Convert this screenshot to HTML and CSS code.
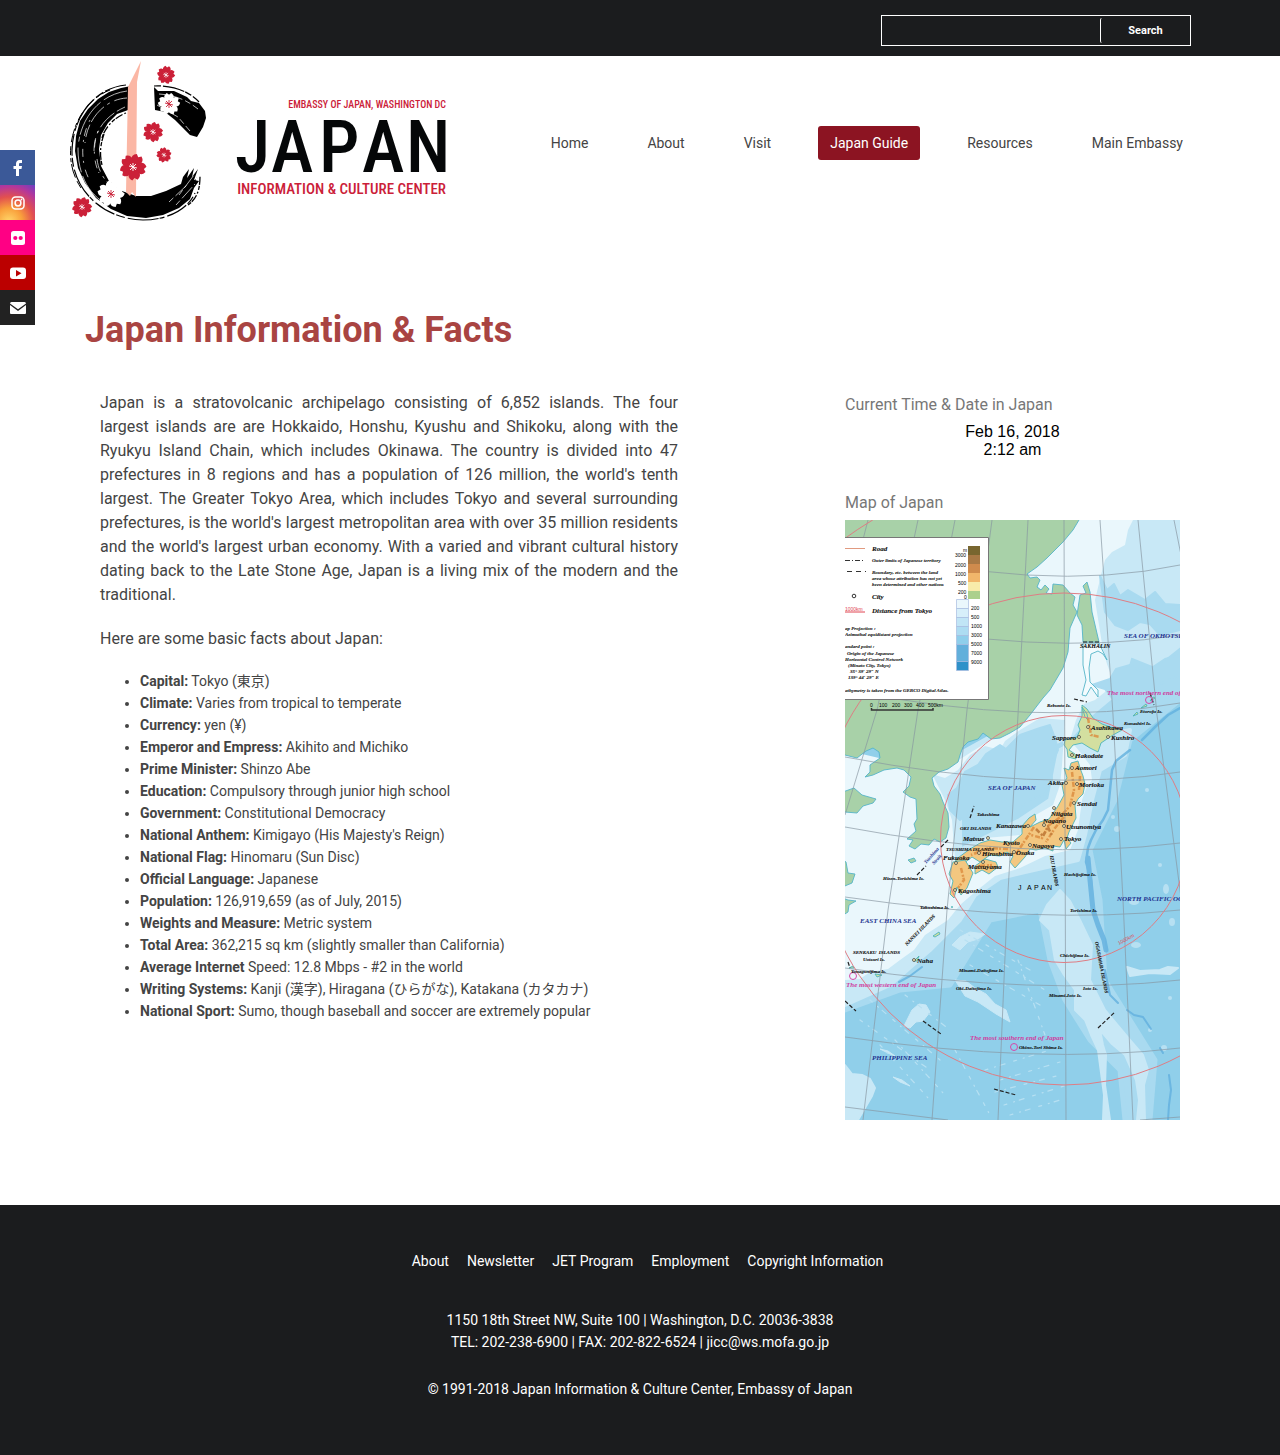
FILE: index.html
```html
<!DOCTYPE html>
<html lang="en">
<head>
<meta charset="utf-8">
<meta name="viewport" content="width=device-width, initial-scale=1">
<title>Japan Information &amp; Facts</title>
<link rel="stylesheet" href="styles.css">
</head>
<body>
<div class="topbar">
  <div class="container">
    <form class="search" role="search">
      <input type="search" class="search-input" aria-label="Search">
      <button type="submit" class="search-button">Search</button>
    </form>
  </div>
</div>

<header class="container header">
  <a class="logo" href="#">
    <svg width="380" height="170" viewBox="70 58 380 170" role="img" aria-label="Japan Information and Culture Center">
      <defs>
        <g id="bloom">
          <path id="petal" d="M0 0L-3.500-4Q-5.800-7.500-2-10L0-8.400L2-10Q5.800-7.500 3.500-4Z"/>
          <use href="#petal" transform="rotate(72)"/><use href="#petal" transform="rotate(144)"/>
          <use href="#petal" transform="rotate(216)"/><use href="#petal" transform="rotate(288)"/>
        </g>
        <path id="stamen" d="M0-4V4M-4-1L4 1M-3 3L3-3M-3-3L3 3" fill="none" stroke-width=".9"/>
      </defs>
      <path d="M131 86L121 88L109 92L98 99L88 109L80 121L76 136L75 151L78 168L85 183L96 198L111 209L127 216L146 218L163 215L179 208L190 199L194 188L199 181L194 180L198 169L192 177L194 168L187 178L189 169L183 177L181 184L166 191L151 196L136 196L122 191L109 181L101 166L99 149L101 135L108 123L117 114L131 109Z"/>
      <path d="M154 87L158 91L174 91L187 97L191 101L199 103L205 111L206 118L203 127L197 137L190 135L183 128L175 120L165 112L155 110Z"/>
      <g fill="none" stroke="#000">
        <path d="M126 85C95 88 73 116 72 150C71 189 102 219 143 220C168 220 188 209 195 193" stroke-width="1.200" stroke-dasharray="22 2 9 3 31 1 5 3"/>
        <path d="M110 90C84 100 70 128 70.500 155C71 168 75 179 81 188" stroke-width="1" stroke-dasharray="9 3 4 2 14 4"/>
        <path d="M154 86C170 85 188 90 199 102" stroke-width="1.200" stroke-dasharray="7 2 22 1"/>
        <path d="M102 138C105 127 115 117 126 113M102 165C99 152 101 143 104 134M147 200C167 202 184 194 197 178M188 205C195 200 200 193 200 176" stroke-width="1.300" stroke-dasharray="4 1 8 2 2 2"/>
      </g>
      <g fill="none" stroke="#fff" stroke-width=".7">
        <path d="M127 91C97 95 79 122 78 149C78 172 87 193 105 203" stroke-dasharray="25 4 39 2 5 6"/>
        <path d="M127 98C105 99 87 119 85 143M94 151C94 133 103 117 125 107M97 159C99 176 110 188 123 194" stroke-dasharray="13 5 3 4 20 3"/>
        <path d="M98 131C93 145 93 160 99 173M90 120C81 137 80 162 89 179" stroke-dasharray="2 7 8 4"/>
        <path d="M159 94C176 95 188 101 198 109M157 105L178 117L190 131M176 205L195 184M179 195L194 175M169 202L187 185" stroke-dasharray="6 3 15 3"/>
      </g>
      <path fill="#fbb7a5" d="M141 61L128 87L126 192L130 196L132 192L136 197L137 82Z"/>
      <g fill="#cb2038" stroke="#fff">
        <g stroke="none">
          <use href="#bloom" transform="translate(166 75) rotate(8) scale(.9)"/>
          <use href="#bloom" transform="translate(153 132) rotate(22) scale(1)"/>
          <use href="#bloom" transform="translate(164 155) rotate(-10) scale(.75)"/>
          <use href="#bloom" transform="translate(133 167) rotate(28) scale(1.320)"/>
          <use href="#bloom" transform="translate(82 207) rotate(28) scale(1)"/>
          <g fill="#fff"><use href="#bloom" transform="translate(169 104) scale(1.100)"/><use href="#bloom" transform="translate(111 194) rotate(5) scale(1.350)"/></g>
        </g>
        <use href="#stamen" transform="translate(166 75) scale(.7)"/><use href="#stamen" transform="translate(153 132) scale(.75)"/>
        <use href="#stamen" transform="translate(164 155) scale(.6)"/><use href="#stamen" transform="translate(133 167)"/>
        <use href="#stamen" transform="translate(82 207) scale(.75)"/>
        <g stroke="#cb2038"><use href="#stamen" transform="translate(169 104)"/><use href="#stamen" transform="translate(111 194)"/></g>
      </g>
      <text class="logo-red" x="446" y="108" font-size="10" text-anchor="end">EMBASSY OF JAPAN, WASHINGTON DC</text>
      <text class="logo-name" x="235 271 319 362 406" y="172" font-size="72">JAPAN</text>
      <text class="logo-red" x="446" y="194" font-size="15" text-anchor="end">INFORMATION &amp; CULTURE CENTER</text>
    </svg>
  </a>
  <nav class="nav" aria-label="Main">
    <a href="#">Home</a>
    <a href="#">About</a>
    <a href="#">Visit</a>
    <a href="#" class="active" aria-current="page">Japan Guide</a>
    <a href="#">Resources</a>
    <a href="#">Main Embassy</a>
  </nav>
</header>

<aside class="social" aria-label="Social media">
  <a class="facebook" href="#" aria-label="Facebook"><svg viewBox="0 0 18 18"><path d="M7 17V10H4.500V7H7V4.800C7 2.300 8.500 1 10.700 1H13V4H11.400C10.400 4 10 4.400 10 5.200V7H13L12.500 10H10V17Z"/></svg></a>
  <a class="instagram" href="#" aria-label="Instagram"><svg viewBox="0 0 18 18"><g fill="none" stroke="#fff" stroke-width="1.500"><rect x="3" y="3" width="12" height="12" rx="3.500"/><circle cx="9" cy="9" r="2.900"/></g><circle cx="12.500" cy="5.500" r=".9"/></svg></a>
  <a class="flickr" href="#" aria-label="Flickr"><svg viewBox="0 0 18 18"><rect x="2" y="2" width="14" height="14" rx="2.500"/><g fill="#ff0084"><circle cx="6.300" cy="9" r="2.100"/><circle cx="11.700" cy="9" r="2.100"/></g></svg></a>
  <a class="youtube" href="#" aria-label="YouTube"><svg viewBox="0 0 18 18"><rect x="1" y="3.500" width="16" height="11.500" rx="3"/><path fill="#b00" d="M7 6V12.500L12.500 9.200Z"/></svg></a>
  <a class="email" href="#" aria-label="Email"><svg viewBox="0 0 18 18"><path d="M1 4.500Q1 3 2.500 3H15.500Q17 3 17 4.500L9 10.300ZM1 6L9 12L17 6V14Q17 15 16 15H2Q1 15 1 14Z"/></svg></a>
</aside>

<main class="container main">
  <h1>Japan Information &amp; Facts</h1>
  <div class="columns">
    <article class="facts">
      <p>Japan is a stratovolcanic archipelago consisting of 6,852 islands. The four largest islands are are Hokkaido, Honshu, Kyushu and Shikoku, along with the Ryukyu Island Chain, which includes Okinawa. The country is divided into 47 prefectures in 8 regions and has a population of 126 million, the world's tenth largest. The Greater Tokyo Area, which includes Tokyo and several surrounding prefectures, is the world's largest metropolitan area with over 35 million residents and the world's largest urban economy. With a varied and vibrant cultural history dating back to the Late Stone Age, Japan is a living mix of the modern and the traditional.</p>
      <p>Here are some basic facts about Japan:</p>
      <ul>
        <li><b>Capital:</b> Tokyo (東京)</li>
        <li><b>Climate:</b> Varies from tropical to temperate</li>
        <li><b>Currency:</b> yen (¥)</li>
        <li><b>Emperor and Empress:</b> Akihito and Michiko</li>
        <li><b>Prime Minister:</b> Shinzo Abe</li>
        <li><b>Education:</b> Compulsory through junior high school</li>
        <li><b>Government:</b> Constitutional Democracy</li>
        <li><b>National Anthem:</b> Kimigayo (His Majesty's Reign)</li>
        <li><b>National Flag:</b> Hinomaru (Sun Disc)</li>
        <li><b>Official Language:</b> Japanese</li>
        <li><b>Population:</b> 126,919,659 (as of July, 2015)</li>
        <li><b>Weights and Measure:</b> Metric system</li>
        <li><b>Total Area:</b> 362,215 sq km (slightly smaller than California)</li>
        <li><b>Average Internet</b> Speed: 12.8 Mbps - #2 in the world</li>
        <li><b>Writing Systems:</b> Kanji (漢字), Hiragana (ひらがな), Katakana (カタカナ)</li>
        <li><b>National Sport:</b> Sumo, though baseball and soccer are extremely popular</li>
      </ul>
    </article>

    <aside class="sidebar">
      <h2>Current Time &amp; Date in Japan</h2>
      <p class="clock">Feb 16, 2018<br>2:12 am</p>
      <h2>Map of Japan</h2>
      <svg class="map" viewBox="845 520 335 600" role="img" aria-label="Map of Japan">
        <rect x="845" y="520" width="335" height="600" fill="#90cfea"/>
        <!-- shelves and basins -->
        <path fill="#a9daf0" stroke="#a9daf0" stroke-width="5" stroke-linejoin="round" d="M930 770L1020 725L1065 660L1100 520H1180V700L1130 740L1115 800L1090 850L1100 900L1105 980L1130 1020L1155 1060L1150 1120H1125L1120 1070L1090 1040L1065 1000L1050 960L1040 910L990 920L950 985L900 990L845 1010V760Z"/>
        <path fill="#c8e8f6" stroke="#c8e8f6" stroke-width="4" stroke-linejoin="round" d="M1078 520H1180V645L1155 665L1130 655L1120 690L1090 715L1072 735L1050 745L1020 740L960 785L960 850L1020 820L1050 800L1060 750L1080 740L1130 730L1125 755L1100 770L1092 800L1085 835L1078 860L1025 872L1000 878L975 895L960 920L930 950L890 985L845 1005V760L930 770L1030 715L1063 670L1070 620L1027 575Z"/>
        <path fill="#eaf7fc" d="M1078 520H1133L1128 530L1125 545L1112 552L1105 560L1101 575L1095 600L1099 625L1103 650L1107 664L1113 680L1105 692L1095 700L1084 704L1076 720L1070 740L1080 752L1090 765L1092 780L1086 789L1082 800L1078 830L1070 850L1045 856L1020 868L995 876L975 892L960 905L948 920L925 935L914 950L900 960L888 969L870 972L860 979L845 980V750L930 770L945 800L952 820L955 860L985 838L1020 835L1027 820L1053 805L1060 785L1062 765L1065 720L1040 718L1020 730L1005 741L1000 750L985 746L970 755L958 770L945 778L935 775L1000 734L1035 706L1062 670L1070 620L1027 575Z"/>
        <path fill="#a9daf0" stroke="#a9daf0" stroke-width="2" stroke-linejoin="round" d="M1100 576L1107 590L1114 584L1120 596L1128 590L1145 600L1155 592L1165 604L1180 605V630L1160 635L1150 624L1140 622L1128 630L1115 625L1105 612ZM1092 685L1110 679L1116 669L1130 665L1140 671L1150 669L1165 659L1180 655V675L1160 684L1145 698L1130 694L1115 702L1105 689ZM965 772L978 765L986 754L1000 745L1006 749L1020 735L1040 728L1050 725L1055 738L1058 750L1051 765L1052 780L1045 794L1030 800L1015 812L1005 798L996 810L980 815L968 813L960 820L950 810L948 795L957 788Z"/>
        <g fill="#c8e8f6" stroke="#c8e8f6" stroke-width="2" stroke-linejoin="round">
          <path d="M1040 920L1047 905L1060 890L1070 901L1080 920L1092 945L1090 980L1105 1010L1130 1040L1143 1055L1148 1070L1144 1085L1145 1120H1137L1139 1100L1136 1080L1125 1055L1112 1044L1100 1030L1103 1045L1106 1055L1105 1085L1110 1120H1103L1104 1095L1098 1050L1091 1035L1085 1020L1075 1010L1075 990L1064 975L1055 960L1050 930ZM845 1065L852 1074L862 1075L870 1079L875 1088L872 1096L865 1108L858 1120H845ZM1127 967L1140 971L1160 970L1168 967L1178 968L1170 974L1150 973L1130 976Z"/>
          <path d="M955 980L966 981L975 988L986 994L995 1004L1006 1010L1010 1022L996 1014L978 1002L965 996ZM912 1010L919 1004L926 1005L930 1012L923 1021L916 1022L910 1028L904 1026ZM880 1049L888 1051L895 1056L890 1054ZM893 1077L902 1080L910 1086L900 1082ZM952 945L960 937L970 932L985 934L978 939L968 942L960 950Z" stroke-width="1"/>
        </g>
        <g fill="#b7e0f2"><circle cx="1147" cy="790" r="2"/><circle cx="1117" cy="829" r="3"/><circle cx="1160" cy="865" r="2"/><circle cx="1113" cy="817" r="2"/><ellipse cx="1166" cy="889" rx="3" ry="5"/><ellipse cx="1134" cy="902" rx="5" ry="3"/><ellipse cx="1172" cy="922" rx="3" ry="4"/><ellipse cx="1136" cy="945" rx="5" ry="3"/><circle cx="1150" cy="1030" r="2"/><circle cx="1164" cy="1048" r="3"/><circle cx="1170" cy="998" r="2"/></g>
        <g fill="none" stroke="#b7e0f2" stroke-width="1.200" stroke-linecap="round" stroke-dasharray="3 7 1 5 5 9">
          <path d="M1000 1080L1060 1062M995 1092L1060 1075M1004 1105L1067 1085M1010 1115L1067 1098M880 1045L930 1100M895 1040L945 1095M905 995L950 1030M960 930L1030 970M970 965L1040 1005M955 1050L990 1115M1018 960L1045 1035M860 1020L930 1070M965 940L1045 990M985 1070L1050 1050M870 1000L940 1060"/>
        </g>
        <g fill="none" stroke="#62b0df" stroke-linejoin="round" stroke-linecap="round" opacity=".8">
          <path d="M1180 708L1168 715L1155 727L1142 740M1130 750L1116 761L1112 770L1110 790L1108 810L1103 820L1096 830L1091 840L1088 848L1086 862L1091 880L1093 905" stroke-width="2.500"/>
          <path d="M1088 858L1090 880L1093 910L1098 925L1104 940L1106 950" stroke-width="5"/>
          <path d="M1105 970L1110 995L1118 1003M1127 1010L1134 1015L1143 1017L1151 1029" stroke-width="2"/>
          <path d="M1169 1075L1171 1090L1169 1105L1168 1120M922 967L910 976L899 982M1160 1048L1163 1053" stroke-width="2"/>
        </g>
        <!-- continent and islands -->
        <g fill="#a8d1a8" stroke="#55b4c8" stroke-width=".9" stroke-linejoin="round">
          <path d="M840 515H1082L1073 530L1063 542L1056 549L1047 558L1037 567L1027 574L1030 578L1037 577L1040 580L1037 587L1041 590L1045 585L1049 589L1046 593L1052 594L1053 584L1063 585L1070 593L1075 597L1073 605L1077 612L1070 628L1068 652L1063 668L1050 690L1043 698L1030 715L1020 727L1010 733L1000 738L991 739L983 733L978 739L968 742L963 747L960 755L958 762L948 769L939 772L932 778L934 786L940 794L943 802L948 813L949 827L946 838L940 842L934 839L929 845L921 844L915 849L909 846L913 840L907 839L916 831L914 824L917 819L916 799L910 797L903 792L909 786L911 777L904 770L897 768L884 770L873 775L865 777L870 772L870 765L880 758L879 752L873 748L866 751L857 758L845 755L840 756Z"/>
          <path d="M840 793L854 788L862 795L876 799L873 803L863 806L857 813L845 812L840 815ZM840 858L846 862L848 873L855 874L852 883L840 888ZM840 897L848 900L856 901L849 905L848 912L840 917ZM908 860l6-2 2 3-5 2zM1087 582L1090 592L1092 612L1099 642H1083L1082 625L1077 615L1080 595L1086 593L1083 586Z"/>
          <path fill="#f3fbfe" d="M1083 643L1099 643L1107 660L1103 654L1098 651L1091 654L1089 668L1090 682L1098 690L1098 697L1091 687L1086 696L1082 695L1086 680L1083 665Z"/>
        </g>
        <g fill="#f3c780" stroke="#4fb4b8" stroke-width=".9" stroke-linejoin="round">
          <path fill="#d3dfa0" d="M1082 705L1087 709L1093 718L1102 724L1110 727L1122 730L1113 735L1107 739L1101 743L1098 752L1090 748L1082 743L1073 745L1069 750L1075 754L1076 759L1068 757L1067 749L1064 745L1065 740L1077 737L1080 730L1078 725L1082 716Z"/>
          <path d="M1064 768L1069 770L1071 763L1078 761L1080 768L1083 776L1085 784L1083 794L1078 799L1075 805L1076 818L1069 832L1067 838L1071 843L1066 849L1064 840L1060 847L1053 846L1053 851L1045 848L1036 850L1030 849L1025 857L1015 868L1010 862L1013 856L1007 852L1000 856L990 855L980 862L972 857L963 864L955 860L970 849L980 843L990 840L1002 842L1013 842L1022 834L1022 826L1029 818L1035 814L1036 820L1030 827L1040 822L1049 819L1058 806L1064 795L1062 785L1067 778Z"/>
          <path d="M953 862L965 860L973 873L967 888L961 895L957 887L954 898L950 894L953 881L949 874ZM975 866L985 859L996 862L998 867L989 874L982 870L975 874Z"/>
          <path fill="#d3dfa0" d="M1082 707l5 7 1 6-3-3zM1133 716l4-4 1 2zM1141 708l5-4 1 2zM1150 701l3-4 2 1zM933 936l6-4 1 2-5 3zM914 961l5-5-2 5zM849 968l4-2 1 2zM951 907l2 0zM875 974l7 1-5 2z"/>
        </g>
        <g fill="none" stroke="#dc8b3d" stroke-width="2.500" stroke-dasharray="5 2 2 1" opacity=".8">
          <path d="M1088 718L1091 735L1100 737M1072 772L1074 790L1070 806L1059 818L1048 826L1042 838L1031 835M1080 776L1079 790M1064 817L1055 828L1046 842M1034 827L1024 842L1016 854M1008 849L989 848L971 855M961 868L964 880L958 888M980 866L992 865"/>
          <path d="M1036 829L1043 836L1048 827L1052 836" stroke="#b9702f"/>
        </g>
        <!-- graticule -->
        <g fill="none" stroke="#8795a0" stroke-width=".9" opacity=".75">
          <path d="M868 520L845 610M918 520L877 710L845 815M955 520L918 710L888 910L863 1120M992 520L967 710L947 910L932 1120M1028 520L1018 715L1007 910L998 1120M1064 520L1066 1120M1100 520L1113 715L1123 900L1133 1120M1138 520L1157 715L1182 905M1174 520L1182 560"/>
          <path d="M845 545Q1040 595 1180 565M845 617Q1040 658 1180 635M845 690Q1040 728 1180 703M845 757Q1040 794 1180 772M845 827Q1030 862 1180 843M845 897Q1040 925 1180 910M845 968Q1040 996 1180 980M845 1037Q1040 1065 1180 1048M845 1107L948 1120M1140 1120L1180 1117"/>
        </g>
        <g fill="none" stroke="#df7d84" stroke-width="1"><circle cx="1064" cy="839" r="123.500"/><circle cx="1064" cy="839" r="246"/><circle cx="1064" cy="839" r="372"/></g>
        <path fill="none" stroke="#222" stroke-width="1.200" stroke-dasharray="4 2" d="M1083 642H1101M1074 699L1087 702M1098 1028L1115 1012M923 1021L941 1034M994 1089L1016 1095M845 1001L856 1011M917 875L926 866M941 847L948 840M970 818L974 806M848 962L850 968M1150 693L1154 705"/>
        <g fill="none" stroke="#d549aa"><circle cx="1149" cy="700" r="3.500"/><circle cx="853" cy="976" r="3.500"/><circle cx="1014" cy="1047" r="3.500"/></g>
        <g fill="#f6e9b8" stroke="#333" stroke-width=".7"><circle cx="1088" cy="727" r="1.500"/><circle cx="1079" cy="737" r="1.500"/><circle cx="1108" cy="737" r="1.500"/><circle cx="1072" cy="755" r="1.500"/><circle cx="1072" cy="768" r="1.500"/><circle cx="1066" cy="783" r="1.500"/><circle cx="1077" cy="784" r="1.500"/><circle cx="1074" cy="803" r="1.500"/><circle cx="1054" cy="808" r="1.500"/><circle cx="1044" cy="825" r="1.500"/><circle cx="1064" cy="826" r="1.500"/><circle cx="1061" cy="839" r="1.500"/><circle cx="1030" cy="845" r="1.500"/><circle cx="1028" cy="826" r="1.500"/><circle cx="1014" cy="852" r="1.500"/><circle cx="988" cy="838" r="1.500"/><circle cx="979" cy="853" r="1.500"/><circle cx="983" cy="862" r="1.500"/><circle cx="956" cy="863" r="1.500"/><circle cx="955" cy="890" r="1.500"/><circle cx="914" cy="960" r="1.500"/></g>
        <g class="map-city">
          <text x="1091" y="730">Asahikawa</text><text x="1052" y="740">Sapporo</text><text x="1111" y="740">Kushiro</text><text x="1075" y="758">Hakodate</text><text x="1075" y="770">Aomori</text><text x="1048" y="785">Akita</text><text x="1079" y="787">Morioka</text><text x="1077" y="806">Sendai</text><text x="1051" y="816">Niigata</text><text x="1043" y="823">Nagano</text><text x="1066" y="829">Utsunomiya</text><text x="1064" y="841">Tokyo</text><text x="1032" y="848">Nagoya</text><text x="1016" y="855">Osaka</text><text x="1003" y="845">Kyoto</text><text x="996" y="828">Kanazawa</text><text x="963" y="841">Matsue</text><text x="982" y="856">Hiroshima</text><text x="968" y="869">Matsuyama</text><text x="943" y="860">Fukuoka</text><text x="958" y="893">Kagoshima</text><text x="917" y="963">Naha</text>
        </g>
        <g class="map-islet">
          <text x="1080" y="648" font-size="6">SAKHALIN</text><text x="1047" y="707">Rebunto Is.</text><text x="1140" y="713">Etorofu Is.</text><text x="1124" y="725">Kunashiri Is.</text><text x="977" y="816">Takeshima</text><text x="960" y="830">OKI ISLANDS</text><text x="946" y="851">TSUSHIMA ISLANDS</text><text x="883" y="880">Hizen-Torishima Is.</text><text x="920" y="909">Yakushima Is.</text><text x="1064" y="876">Hachijojima Is.</text><text x="1070" y="912">Torishima Is.</text><text x="1060" y="957">Chichijima Is.</text><text x="1083" y="990">Ioto Is.</text><text x="1049" y="997">Minami-Ioto Is.</text><text x="959" y="972">Minami-Daitojima Is.</text><text x="956" y="990">Oki-Daitojima Is.</text><text x="1019" y="1049">Okino-Tori Shima Is.</text><text x="853" y="954">SENKAKU&#160; ISLANDS</text><text x="863" y="961">Uotsuri Is.</text><text x="851" y="973">Yonagunijima Is.</text>
          <text transform="translate(907 946) rotate(-46)">NANSEI ISLANDS</text><text transform="translate(1095 942) rotate(79)">OGASAWARA ISLANDS</text><text transform="translate(1050 856) rotate(80)">IZU ISLANDS</text>
        </g>
        <g class="map-sea"><text x="1124" y="638">SEA OF OKHOTSK</text><text x="988" y="790">SEA OF JAPAN</text><text x="1117" y="901">NORTH PACIFIC OCEAN</text><text x="860" y="923">EAST CHINA SEA</text><text x="872" y="1060">PHILIPPINE SEA</text></g>
        <g class="map-strait"><text transform="translate(926 864) rotate(-48)">Tsushima</text><text transform="translate(934 865) rotate(-48)">Strait</text></g>
        <g class="map-end"><text x="1107" y="695">The most northern end of Japan</text><text x="846" y="987">The most western end of Japan</text><text x="970" y="1040">The most southern end of Japan</text></g>
        <text class="map-sans" font-size="7" x="1018 1027 1034 1041 1047" y="890">JAPAN</text>
        <text class="map-sans" font-size="5" fill="#e04450" transform="translate(1119 945) rotate(-28)">1000km</text>
        <!-- legend -->
        <path fill="#fff" stroke="#777" d="M840 537.500H988.500V699.500H840Z"/>
        <g fill="none" stroke="#333"><path stroke="#e19a80" d="M845 548.500H865"/><path stroke-dasharray="5 2 1 2" d="M845 560.500H865"/><path stroke-dasharray="5 4" d="M847 571.500H866"/><circle cx="854" cy="596" r="1.800"/><path stroke="#e04450" d="M845 612H865"/><path stroke-width="1.500" d="M871.500 708V710H933V708"/></g>
        <g class="map-city"><text x="872" y="551">Road</text><text x="872" y="599">City</text><text x="872" y="613">Distance from Tokyo</text></g>
        <g class="map-note"><text x="872" y="562">Outer limits of Japanese territory</text><text x="872" y="574">Boundary, etc. between the land</text><text x="872" y="580">area whose attribution has not yet</text><text x="872" y="586">been determined and other nations</text><text x="845" y="630">ap Projection :</text><text x="845" y="636">Azimuthal equidistant projection</text><text x="845" y="648">andard point :</text><text x="847" y="655">Origin of the Japanese</text><text x="845" y="661">Horizontal Control Network</text><text x="848" y="667">(Minato City, Tokyo)</text><text x="850" y="673">35° 39′ 29″ N</text><text x="848" y="679">139° 44′ 29″ E</text><text x="845" y="692">athymetry is taken from the GEBCO Digital Atlas.</text></g>
        <g class="map-sans" font-size="5"><text x="845" y="611" fill="#e04450">1000km</text><text x="963" y="552">m</text><text x="955" y="557">3000</text><text x="955" y="567">2000</text><text x="955" y="576">1000</text><text x="958" y="585">500</text><text x="958" y="594">200</text><text x="964" y="599">0</text><text x="971" y="610">200</text><text x="971" y="619">500</text><text x="971" y="628">1000</text><text x="971" y="637">3000</text><text x="971" y="646">5000</text><text x="971" y="655">7000</text><text x="971" y="664">9000</text><text x="870" y="707">0</text><text x="879" y="707">100</text><text x="892" y="707">200</text><text x="904" y="707">300</text><text x="916" y="707">400</text><text x="928" y="707">500km</text></g>
        <path fill="#78662f" d="M968 546h12v9h-12z"/><path fill="#a87945" d="M968 555h12v9h-12z"/><path fill="#cf8b4d" d="M968 564h12v9h-12z"/><path fill="#f1b66b" d="M968 573h12v9h-12z"/><path fill="#f8ebaa" d="M968 582h12v9h-12z"/><path fill="#acd08d" d="M968 591h12v8h-12z"/>
        <g stroke="#a7bce0" stroke-width=".7"><path fill="#eaf7fc" d="M956.500 599.500h12v9h-12z"/><path fill="#d7effa" d="M956.500 608.500h12v9h-12z"/><path fill="#c1e5f6" d="M956.500 617.500h12v9h-12z"/><path fill="#addcf2" d="M956.500 626.500h12v9h-12z"/><path fill="#8eceeb" d="M956.500 635.500h12v9h-12z"/><path fill="#62afdb" d="M956.500 644.500h12v17h-12z"/><path fill="#2f91c9" d="M956.500 661.500h12v9h-12z"/></g>
      </svg>
    </aside>
  </div>
</main>

<footer class="footer">
  <nav class="footer-nav" aria-label="Footer">
    <a href="#">About</a>
    <a href="#">Newsletter</a>
    <a href="#">JET Program</a>
    <a href="#">Employment</a>
    <a href="#">Copyright Information</a>
  </nav>
  <address>1150 18th Street NW, Suite 100 | Washington, D.C. 20036-3838<br>TEL: 202-238-6900 | FAX: 202-822-6524 | jicc@ws.mofa.go.jp</address>
  <p>© 1991-2018 Japan Information &amp; Culture Center, Embassy of Japan</p>
</footer>
</body>
</html>
```
FILE: styles.css
```css
*, *::before, *::after { box-sizing: border-box; }

body {
  margin: 0;
  background: #fff;
  color: #444;
  font: 14px/22px Roboto, "Noto Sans CJK JP", sans-serif;
}

a { color: inherit; text-decoration: none; }

.container {
  max-width: 1140px;
  margin: 0 auto;
}

/* Top bar */
.topbar { background: #1b1c1e; padding: 15px 0 10px; }
.topbar .container { padding-right: 19px; }

.search {
  display: flex;
  align-items: center;
  width: 310px;
  height: 31px;
  margin-left: auto;
  border: 1px solid #fff;
}
.search-input {
  flex: 1;
  min-width: 0;
  height: 25px;
  padding: 0 8px;
  border: 0;
  outline: 0;
  background: transparent;
  color: #fff;
}
.search-button {
  width: 90px;
  height: 25px;
  padding: 0;
  border: 0;
  border-left: 1px solid #fff;
  border-radius: 2px;
  background: transparent;
  color: #fff;
  font: bold 11px/16px Roboto, sans-serif;
}

/* Header */
.header {
  display: flex;
  align-items: center;
  justify-content: space-between;
  min-height: 174px;
  padding-right: 15px;
}
.logo { display: block; }
.logo svg { display: block; }
.logo-red,
.logo-name {
  font-family: "Roboto Condensed", "Liberation Sans Narrow", Roboto, sans-serif;
  font-weight: 500;
}
.logo-red { fill: #cb2038; }
.logo-name { fill: #050708; }

.nav { display: flex; gap: 35px; }
.nav a { padding: 6px 12px; border-radius: 3px; }
.nav .active { background: #8c1422; color: #fff; }

/* Social links */
.social { position: fixed; left: 0; top: 150px; width: 35px; }
.social a {
  display: flex;
  align-items: center;
  justify-content: center;
  height: 35px;
}
.social svg { width: 18px; height: 18px; fill: #fff; }
.facebook { background: #3b5998; }
.instagram { background: radial-gradient(circle at 25% 105%, #ffd86a 0, #f9a03c 30%, #e2504f 55%, #b5379a 78%, #6a3fc4 100%); }
.flickr { background: #ff0084; }
.youtube { background: #b00; }
.email { background: #222; }

/* Content */
.main { padding: 80px 15px 85px; }
h1 {
  margin: 0 0 41px;
  color: #a94442;
  font-size: 36px;
  line-height: 40px;
}
.columns {
  display: flex;
  justify-content: space-between;
  gap: 40px;
  padding: 0 15px;
}
.facts { flex: 0 1 578px; }
.facts p {
  margin: 0 0 20px;
  font-size: 16px;
  line-height: 24px;
  text-align: justify;
}
.facts p:last-of-type { margin-bottom: 19px; }
.facts ul { margin: 0; padding-left: 40px; }

.sidebar { flex: 0 0 335px; padding-top: 2px; }
.sidebar h2 {
  margin: 0 0 6px;
  color: #777;
  font-size: 16px;
  font-weight: normal;
  line-height: 24px;
}
.sidebar h2:last-of-type { margin-bottom: 5px; }
.clock {
  margin: 0 0 32px;
  color: #000;
  font: 16px/18px "Liberation Sans", Arial, sans-serif;
  text-align: center;
}
.map { display: block; width: 100%; height: auto; }
.map text {
  font-family: "Liberation Serif", serif;
  font-weight: bold;
  font-style: italic;
}
.map-city { fill: #111; stroke: #111; stroke-width: .1; font-size: 7px; }
.map-islet { fill: #111; stroke: #111; stroke-width: .1; font-size: 5px; }
.map-note { fill: #222; stroke: #222; stroke-width: .1; font-size: 5px; }
.map-sea { fill: #22328f; font-size: 7px; }
.map-strait { fill: #22328f; font-size: 5px; }
.map-end { fill: #cf3d9f; font-size: 7px; }
.map .map-sans, .map .map-sans text {
  font-family: "Liberation Sans", sans-serif;
  font-style: normal;
  font-weight: normal;
}

/* Footer */
.footer {
  padding: 45px 15px 55px;
  background: #1b1c1e;
  color: #fff;
  text-align: center;
}
.footer-nav {
  display: flex;
  flex-wrap: wrap;
  justify-content: center;
  gap: 0 18px;
  margin-bottom: 37px;
  padding-left: 15px;
}
.footer address { margin-bottom: 25px; font-style: normal; }
.footer p { margin: 0; }
```
